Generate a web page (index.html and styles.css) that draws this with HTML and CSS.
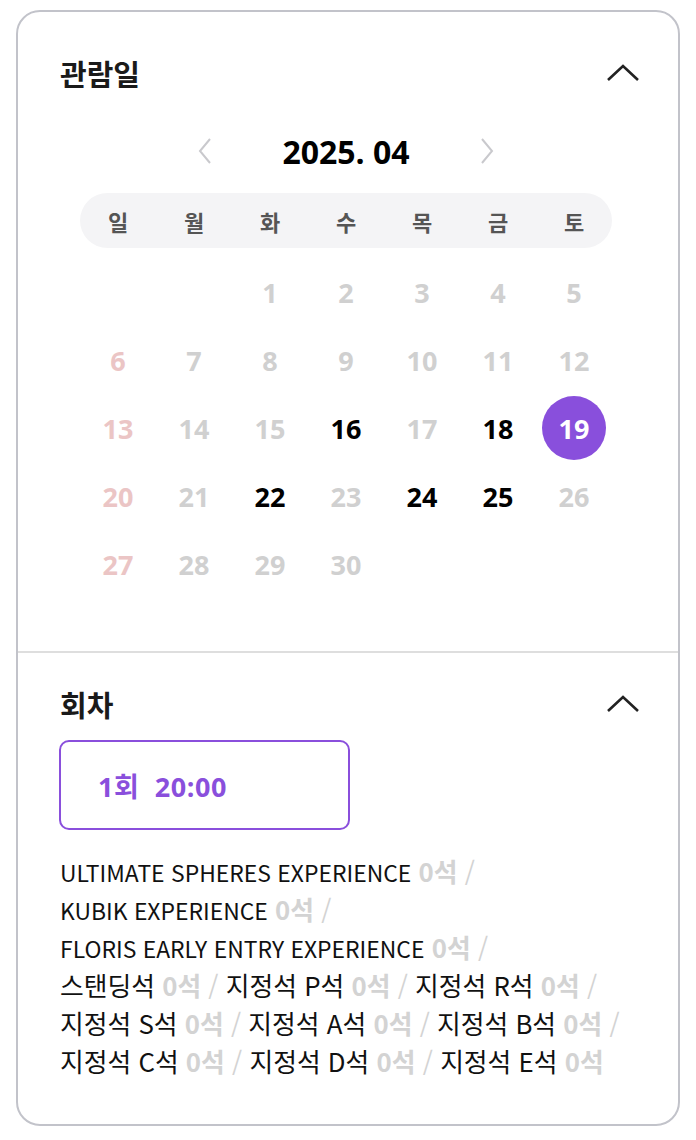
FILE: index.html
```html
<!DOCTYPE html>
<html lang="ko">
<head>
    <meta charset="UTF-8">
    <meta name="viewport" content="width=device-width, initial-scale=1.0">
    <title>예매 - 관람일 / 회차</title>
    <link rel="stylesheet" href="styles.css">
</head>
<body>
    <div class="booking-panel">
        <section class="panel-section date-section">
            <div class="section-head">
                <h2 class="section-title">관람일</h2>
                <svg class="toggle-icon" width="34" height="20" viewBox="0 0 34 20">
                    <polyline points="2,17 17,3 32,17" fill="none" stroke="#222" stroke-width="2.6"/>
                </svg>
            </div>

            <div class="month-nav">
                <svg class="nav-arrow" width="14" height="26" viewBox="0 0 14 26">
                    <polyline points="12,1 2,13 12,25" fill="none" stroke="#c9c9cd" stroke-width="2"/>
                </svg>
                <span class="month-label">2025. 04</span>
                <svg class="nav-arrow" width="14" height="26" viewBox="0 0 14 26">
                    <polyline points="2,1 12,13 2,25" fill="none" stroke="#c9c9cd" stroke-width="2"/>
                </svg>
            </div>

            <div class="weekdays">
                <span>일</span><span>월</span><span>화</span><span>수</span><span>목</span><span>금</span><span>토</span>
            </div>

            <div class="days">
                <span class="day"></span>
                <span class="day"></span>
                <span class="day off">1</span>
                <span class="day off">2</span>
                <span class="day off">3</span>
                <span class="day off">4</span>
                <span class="day off">5</span>

                <span class="day sun">6</span>
                <span class="day off">7</span>
                <span class="day off">8</span>
                <span class="day off">9</span>
                <span class="day off">10</span>
                <span class="day off">11</span>
                <span class="day off">12</span>

                <span class="day sun">13</span>
                <span class="day off">14</span>
                <span class="day off">15</span>
                <span class="day on">16</span>
                <span class="day off">17</span>
                <span class="day on">18</span>
                <span class="day selected"><b>19</b></span>

                <span class="day sun">20</span>
                <span class="day off">21</span>
                <span class="day on">22</span>
                <span class="day off">23</span>
                <span class="day on">24</span>
                <span class="day on">25</span>
                <span class="day off">26</span>

                <span class="day sun">27</span>
                <span class="day off">28</span>
                <span class="day off">29</span>
                <span class="day off">30</span>
            </div>
        </section>

        <section class="panel-section time-section">
            <div class="section-head">
                <h2 class="section-title">회차</h2>
                <svg class="toggle-icon" width="34" height="20" viewBox="0 0 34 20">
                    <polyline points="2,17 17,3 32,17" fill="none" stroke="#222" stroke-width="2.6"/>
                </svg>
            </div>

            <button class="time-button">1회&nbsp; 20:00</button>

            <div class="seat-info">
                <div class="seat-line">
                    <span class="seat"><span class="seat-name-en">ULTIMATE SPHERES EXPERIENCE</span> <b>0석</b> <i>/</i></span>
                </div>
                <div class="seat-line">
                    <span class="seat"><span class="seat-name-en">KUBIK EXPERIENCE</span> <b>0석</b> <i>/</i></span>
                </div>
                <div class="seat-line">
                    <span class="seat"><span class="seat-name-en">FLORIS EARLY ENTRY EXPERIENCE</span> <b>0석</b> <i>/</i></span>
                </div>
                <div class="seat-line">
                    <span class="seat">스탠딩석 <b>0석</b> <i>/</i></span>
                    <span class="seat">지정석 P석 <b>0석</b> <i>/</i></span>
                    <span class="seat">지정석 R석 <b>0석</b> <i>/</i></span>
                </div>
                <div class="seat-line">
                    <span class="seat">지정석 S석 <b>0석</b> <i>/</i></span>
                    <span class="seat">지정석 A석 <b>0석</b> <i>/</i></span>
                    <span class="seat">지정석 B석 <b>0석</b> <i>/</i></span>
                </div>
                <div class="seat-line">
                    <span class="seat">지정석 C석 <b>0석</b> <i>/</i></span>
                    <span class="seat">지정석 D석 <b>0석</b> <i>/</i></span>
                    <span class="seat">지정석 E석 <b>0석</b></span>
                </div>
            </div>
        </section>
    </div>
</body>
</html>
```

FILE: styles.css
```css
/* Global Styles */
body {
    margin: 0;
    padding: 10px 16px;
    background: #fff;
    font-family: 'Open Sans', 'Noto Sans CJK KR', sans-serif;
    color: #000;
}

.booking-panel {
    border: 2px solid #c2c3ca;
    border-radius: 24px;
    background: #fff;
}

.panel-section {
    padding: 43px 42px 53px;
}

.time-section {
    border-top: 2px solid #dedede;
    padding-top: 33px;
    padding-bottom: 44px;
}

.section-head {
    display: flex;
    justify-content: space-between;
    align-items: center;
    height: 36px;
}

.section-title {
    margin: 0;
    font-size: 29px;
    font-weight: 700;
    color: #1a1a1a;
}

.toggle-icon {
    margin-right: -4px;
}

/* Calendar */
.month-nav {
    display: flex;
    justify-content: center;
    align-items: center;
    gap: 66px;
    width: 532px;
    height: 40px;
    margin: 40px 0 0 20px;
}

.month-label {
    font-size: 32px;
    font-weight: 700;
    width: 136px;
    text-align: center;
    white-space: nowrap;
}

.weekdays {
    display: grid;
    grid-template-columns: repeat(7, 76px);
    align-items: center;
    width: 532px;
    height: 55px;
    margin: 22px 0 0 20px;
    background: #f4f4f6;
    border-radius: 28px;
}

.weekdays span {
    text-align: center;
    font-size: 22px;
    font-weight: 700;
    color: #555;
}

.days {
    display: grid;
    grid-template-columns: repeat(7, 76px);
    grid-auto-rows: 68px;
    margin: 10px 0 0 20px;
}

.day {
    display: flex;
    justify-content: center;
    align-items: center;
    font-size: 27px;
    font-weight: 700;
}

.day.off {
    color: #d0d0d0;
}

.day.sun {
    color: #ebc5c5;
}

.day.on {
    color: #000;
}

.day.selected b {
    display: flex;
    justify-content: center;
    align-items: center;
    width: 64px;
    height: 64px;
    border-radius: 50%;
    background: #894fdc;
    color: #fff;
    font-weight: 700;
}

/* Session */
.time-button {
    display: block;
    width: 291px;
    height: 90px;
    margin-top: 18px;
    margin-left: -1px;
    padding: 0 0 0 37px;
    text-align: left;
    background: #fff;
    border: 2px solid #8a4fdc;
    border-radius: 10px;
    font-family: inherit;
    font-size: 27px;
    letter-spacing: 0.6px;
    font-weight: 700;
    color: #8a4fdc;
}

.seat-info {
    margin-top: 22px;
    font-family: 'Noto Sans CJK KR', sans-serif;
    font-size: 25.8px;
    line-height: 38px;
    color: #111;
}

.seat-line {
    height: 38px;
    white-space: nowrap;
}

.seat-name-en {
    font-size: 22.9px;
}

.seat b {
    color: #d3d3d3;
    font-weight: 700;
}

.seat i {
    font-style: normal;
    color: #d3d3d3;
}
```
